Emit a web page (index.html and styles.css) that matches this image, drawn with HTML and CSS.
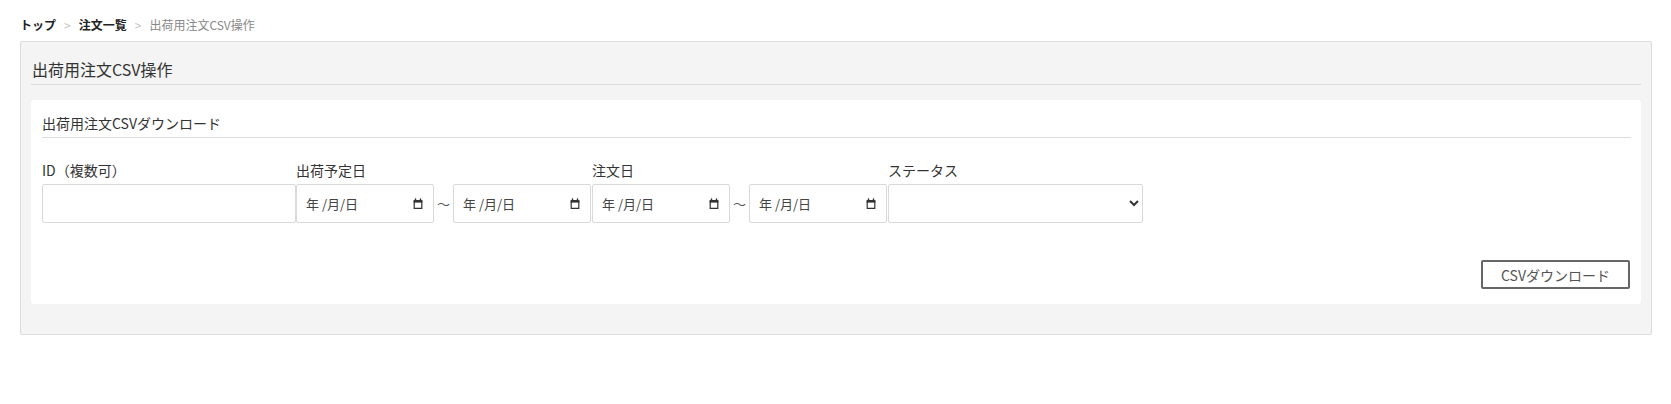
FILE: index.html
```html
<!DOCTYPE html>
<html lang="ja">
  <head>
    <meta charset="UTF-8" />
    <meta name="viewport" content="width=device-width, initial-scale=1.0" />
    <title>出荷用注文CSV操作</title>
    <link rel="stylesheet" href="styles.css">
  </head>
  <body>
    <nav class="breadcrumb">
      <a href="#" class="crumb">トップ</a>
      <span class="sep">&gt;</span>
      <a href="#" class="crumb">注文一覧</a>
      <span class="sep">&gt;</span>
      <span class="current">出荷用注文CSV操作</span>
    </nav>

    <div class="panel">
      <h1 class="panel-title">出荷用注文CSV操作</h1>

      <div class="box">
        <h2 class="box-title">出荷用注文CSVダウンロード</h2>

        <form class="search">
          <div class="field field-id">
            <label for="orderIds">ID（複数可）</label>
            <input type="text" id="orderIds" name="orderIds" />
          </div>

          <div class="field field-range">
            <label>出荷予定日</label>
            <div class="range">
              <div class="date-input">
                <span>年 /月/日</span>
                <svg width="10" height="11" viewBox="0 0 10 11"><path d="M1.2 3.5h7.6v6.9H1.2z" fill="none" stroke="#333" stroke-width="1.2"/><rect x="0.6" y="2" width="8.8" height="2.6" fill="#333"/><rect x="1.8" y="0.4" width="1.4" height="2" fill="#333"/><rect x="6.8" y="0.4" width="1.4" height="2" fill="#333"/></svg>
              </div>
              <span class="tilde">～</span>
              <div class="date-input">
                <span>年 /月/日</span>
                <svg width="10" height="11" viewBox="0 0 10 11"><path d="M1.2 3.5h7.6v6.9H1.2z" fill="none" stroke="#333" stroke-width="1.2"/><rect x="0.6" y="2" width="8.8" height="2.6" fill="#333"/><rect x="1.8" y="0.4" width="1.4" height="2" fill="#333"/><rect x="6.8" y="0.4" width="1.4" height="2" fill="#333"/></svg>
              </div>
            </div>
          </div>

          <div class="field field-range">
            <label>注文日</label>
            <div class="range">
              <div class="date-input">
                <span>年 /月/日</span>
                <svg width="10" height="11" viewBox="0 0 10 11"><path d="M1.2 3.5h7.6v6.9H1.2z" fill="none" stroke="#333" stroke-width="1.2"/><rect x="0.6" y="2" width="8.8" height="2.6" fill="#333"/><rect x="1.8" y="0.4" width="1.4" height="2" fill="#333"/><rect x="6.8" y="0.4" width="1.4" height="2" fill="#333"/></svg>
              </div>
              <span class="tilde">～</span>
              <div class="date-input">
                <span>年 /月/日</span>
                <svg width="10" height="11" viewBox="0 0 10 11"><path d="M1.2 3.5h7.6v6.9H1.2z" fill="none" stroke="#333" stroke-width="1.2"/><rect x="0.6" y="2" width="8.8" height="2.6" fill="#333"/><rect x="1.8" y="0.4" width="1.4" height="2" fill="#333"/><rect x="6.8" y="0.4" width="1.4" height="2" fill="#333"/></svg>
              </div>
            </div>
          </div>

          <div class="field field-status">
            <label for="status">ステータス</label>
            <select id="status" name="status">
              <option value=""></option>
            </select>
          </div>
        </form>

        <div class="actions">
          <button type="button" class="btn">CSVダウンロード</button>
        </div>
      </div>
    </div>
  </body>
</html>
```

FILE: styles.css
```css
body {
  margin: 0 19px 0 20px;
  font-family: "Noto Sans CJK JP", "Noto Sans", sans-serif;
  color: #333;
  background: #fff;
}
.breadcrumb {
  display: flex;
  align-items: center;
  height: 17px;
  padding: 16px 0 8px 0;
  font-size: 12px;
  line-height: 17px;
}
.crumb {
  color: #222;
  font-weight: bold;
  text-decoration: none;
}
.sep {
  color: #c4c4c4;
  margin: 0 8px;
}
.current {
  color: #888;
}
.panel {
  border: 1px solid #dcdcdc;
  border-radius: 2px;
  background: #f4f4f4;
  padding: 10px;
}
.panel-title {
  margin: 0;
  padding: 5px 1px 3px;
  font-size: 16px;
  font-weight: normal;
  line-height: 24px;
  color: #333;
  border-bottom: 1px solid #dcdcdc;
}
.box {
  margin: 15px 0 20px;
  padding: 0 10px 15px 11px;
  background: #fff;
  border-radius: 3px;
}
.box-title {
  margin: 0;
  padding: 13px 0 4px;
  font-size: 14px;
  font-weight: normal;
  line-height: 20px;
  color: #333;
  border-bottom: 1px solid #dcdcdc;
}
.search {
  display: flex;
  margin-top: 22px;
}
.field label {
  display: block;
  font-size: 14px;
  line-height: 20px;
  margin-bottom: 4px;
  color: #333;
}
.field input,
.field select,
.date-input {
  box-sizing: border-box;
  height: 39px;
  border: 1px solid #d9d9d9;
  border-radius: 2px;
  background: #fff;
  font-family: inherit;
}
.field-id {
  width: 254px;
}
.field-id input {
  width: 100%;
  padding: 0 8px;
}
.field-range {
  width: 296px;
}
.range {
  display: flex;
  align-items: center;
}
.date-input {
  display: flex;
  align-items: center;
  justify-content: space-between;
  width: 138px;
  padding: 0 10px 0 9px;
  font-size: 13px;
  color: #444;
}
.tilde {
  width: 19px;
  text-align: center;
  font-size: 13px;
  color: #555;
}
.field-status {
  width: 255px;
}
.field-status select {
  width: 100%;
  font-size: 14px;
  color: #333;
}
.actions {
  display: flex;
  justify-content: flex-end;
  margin-top: 37px;
  padding-right: 1px;
}
.btn {
  box-sizing: border-box;
  width: 149px;
  height: 29px;
  border: 2px solid #666;
  border-radius: 2px;
  background: #fff;
  font-family: inherit;
  font-size: 14px;
  color: #555;
  cursor: pointer;
}
```
